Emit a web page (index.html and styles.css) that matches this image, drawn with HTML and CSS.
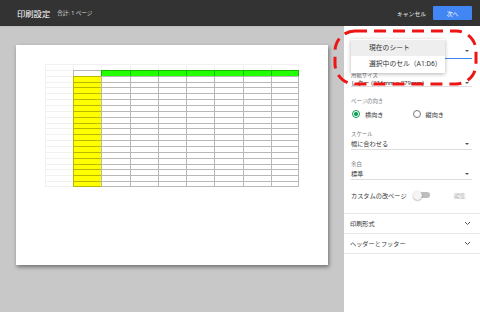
FILE: index.html
```html
<!DOCTYPE html>
<html lang="ja">
<head>
<meta charset="UTF-8">
<meta name="viewport" content="width=device-width, initial-scale=1.0">
<title>印刷設定</title>
<link rel="stylesheet" href="styles.css">
</head>
<body>

<header class="topbar">
  <div class="title">印刷設定<span class="total">合計: 1 ページ</span></div>
  <div class="actions">
    <button class="cancel">キャンセル</button>
    <button class="next">次へ</button>
  </div>
</header>

<main class="layout">
  <section class="preview">
    <div class="paper">
      <div class="sheet" id="sheet"></div>
    </div>
  </section>

  <aside class="panel">
    <div class="field first">
      <div class="select active"><span></span><i class="caret"></i></div>
    </div>
    <div class="field paper-size">
      <div class="field-label">用紙サイズ</div>
      <div class="select"><span>レター (216mm x 279mm)</span><i class="caret"></i></div>
    </div>
    <div class="field orient">
      <div class="field-label">ページの向き</div>
      <div class="radios">
        <label class="radio checked"><span class="dot"></span>横向き</label>
        <label class="radio"><span class="dot"></span>縦向き</label>
      </div>
    </div>
    <div class="field">
      <div class="field-label">スケール</div>
      <div class="select"><span>幅に合わせる</span><i class="caret"></i></div>
    </div>
    <div class="field">
      <div class="field-label">余白</div>
      <div class="select"><span>標準</span><i class="caret"></i></div>
    </div>
    <div class="switch-row">
      <span>カスタムの改ページ</span>
      <span class="toggle"></span>
      <span class="edit">編集</span>
    </div>
    <div class="sections">
      <div class="section-row">印刷形式
        <svg width="7" height="5" viewBox="0 0 7 5"><path d="M1 1l2.5 2.5L6 1" fill="none" stroke="#555" stroke-width="1"/></svg>
      </div>
      <div class="section-row">ヘッダーとフッター
        <svg width="7" height="5" viewBox="0 0 7 5"><path d="M1 1l2.5 2.5L6 1" fill="none" stroke="#555" stroke-width="1"/></svg>
      </div>
    </div>

    <div class="menu">
      <div class="menu-item selected">現在のシート</div>
      <div class="menu-item">選択中のセル（A1:D6）</div>
    </div>
  </aside>
</main>

<svg class="callout" width="146" height="60" viewBox="0 0 146 60">
  <rect x="2" y="2" width="141" height="53" rx="20" fill="none" stroke="#ee1515" stroke-width="3" stroke-dasharray="12 7"/>
</svg>

<script>
const sheet = document.getElementById('sheet');
for (let r = 0; r < 21; r++) {
  for (let c = 0; c < 9; c++) {
    const cell = document.createElement('div');
    cell.className = 'cell';
    if (r === 0 || c === 0) cell.classList.add('head');
    else if (c === 1 && r > 1) cell.classList.add('yellow');
    else if (r === 1 && c > 1) cell.classList.add('green');
    if (c === 8) cell.classList.add('last-col');
    if (r === 20) cell.classList.add('last-row');
    sheet.appendChild(cell);
  }
}
</script>

</body>
</html>
```

FILE: styles.css
```css
body {
  margin: 0;
  width: 480px;
  height: 312px;
  overflow: hidden;
  font-family: Roboto, "Noto Sans CJK JP", sans-serif;
  color: #333;
  position: relative;
}
.topbar {
  height: 26px;
  background: #333;
  display: flex;
  align-items: center;
  justify-content: space-between;
  padding: 0 8px 0 17px;
}
.title {
  color: #fff;
  font-size: 8.3px;
  display: flex;
  align-items: center;
}
.total {
  font-size: 5.6px;
  color: #ddd;
  margin-left: 7px;
}
.actions {
  display: flex;
  align-items: center;
}
.actions button {
  font-family: inherit;
  border: none;
  cursor: pointer;
  padding: 0;
}
.cancel {
  background: none;
  color: #eee;
  font-size: 5.8px;
  margin-right: 7px;
}
.next {
  background: #4285f4;
  color: #fff;
  font-size: 5.8px;
  width: 39px;
  height: 14px;
  border-radius: 1px;
}
.layout {
  display: flex;
  height: 286px;
}
.preview {
  flex: none;
  width: 344px;
  background: #c8c8c8;
  border-top: 1px solid #bdbdbd;
  box-sizing: border-box;
}
.paper {
  width: 312px;
  height: 220px;
  margin: 18px 0 0 16px;
  background: #fff;
  box-shadow: 1px 2px 4px rgba(0,0,0,0.45);
  overflow: hidden;
}
.sheet {
  display: grid;
  grid-template-columns: repeat(9, 1fr);
  grid-template-rows: repeat(21, 1fr);
  width: 254px;
  height: 123px;
  margin: 19px 0 0 29px;
}
.cell {
  border-top: 1px solid rgba(0,0,0,0.28);
  border-left: 1px solid rgba(0,0,0,0.28);
}
.cell.last-col {
  border-right: 1px solid rgba(0,0,0,0.28);
}
.cell.last-row {
  border-bottom: 1px solid rgba(0,0,0,0.28);
}
.cell.head,
.cell.head.last-col,
.cell.head.last-row {
  border-color: #f1f1f1;
}
.yellow {
  background: #ffff00;
}
.green {
  background: #22ff00;
}

.panel {
  flex: 1;
  min-width: 0;
  background: #fff;
  position: relative;
  overflow: hidden;
}
.field {
  padding: 0 8px 0 7px;
  margin-top: 10px;
}
.field.first {
  margin-top: 17px;
}
.field.paper-size {
  margin-top: 12px;
}
.field-label {
  font-size: 5.4px;
  color: #777;
  height: 8px;
  line-height: 8px;
  white-space: nowrap;
}
.select {
  display: flex;
  align-items: center;
  justify-content: space-between;
  height: 11px;
  font-size: 6.2px;
  border-bottom: 1px solid #ddd;
  white-space: nowrap;
}
.field.first .select {
  height: 15px;
  border-bottom-color: #4285f4;
}
.field.paper-size .select {
  height: 7px;
}
.caret {
  width: 0;
  height: 0;
  border-left: 2px solid transparent;
  border-right: 2px solid transparent;
  border-top: 2.5px solid #555;
  margin-right: 3px;
}
.field.orient {
  margin-top: 10px;
}
.radios {
  display: flex;
  align-items: center;
  height: 12px;
  margin-top: 3px;
  font-size: 6.2px;
}
.radio {
  display: flex;
  align-items: center;
  gap: 5px;
  width: 61px;
  margin-left: 1px;
}
.dot {
  width: 8px;
  height: 8px;
  box-sizing: border-box;
  border: 1px solid #777;
  border-radius: 50%;
  display: flex;
  align-items: center;
  justify-content: center;
}
.radio.checked .dot {
  border: 1.3px solid #0f9d58;
}
.radio.checked .dot::after {
  content: "";
  width: 3.6px;
  height: 3.6px;
  border-radius: 50%;
  background: #0f9d58;
}
.switch-row {
  display: flex;
  align-items: center;
  height: 12px;
  margin-top: 9px;
  padding: 0 14px 0 7px;
  font-size: 6.2px;
}
.toggle {
  position: relative;
  width: 16px;
  height: 6px;
  border-radius: 3px;
  background: #bdbdbd;
  margin-left: 7px;
}
.toggle::before {
  content: "";
  position: absolute;
  left: -1px;
  top: -1.5px;
  width: 9px;
  height: 9px;
  border-radius: 50%;
  background: #f5f5f5;
  box-shadow: 0 0.5px 1.5px rgba(0,0,0,0.4);
}
.edit {
  margin-left: auto;
  color: #b5b5b5;
}
.sections {
  margin-top: 12px;
  border-top: 1px solid #e6e6e6;
}
.section-row {
  display: flex;
  align-items: center;
  justify-content: space-between;
  height: 19px;
  padding: 0 9px 0 6px;
  font-size: 6.2px;
  border-bottom: 1px solid #e6e6e6;
}
.menu {
  position: absolute;
  left: 7px;
  top: 13px;
  width: 94px;
  background: #fff;
  box-shadow: 0 1px 4px rgba(0,0,0,0.3);
  padding: 1px 0;
}
.menu-item {
  height: 16px;
  line-height: 16px;
  padding-left: 18px;
  font-size: 6.8px;
  color: #333;
  white-space: nowrap;
}
.menu-item.selected {
  background: #eee;
}
.callout {
  position: absolute;
  left: 333px;
  top: 29px;
}
```
